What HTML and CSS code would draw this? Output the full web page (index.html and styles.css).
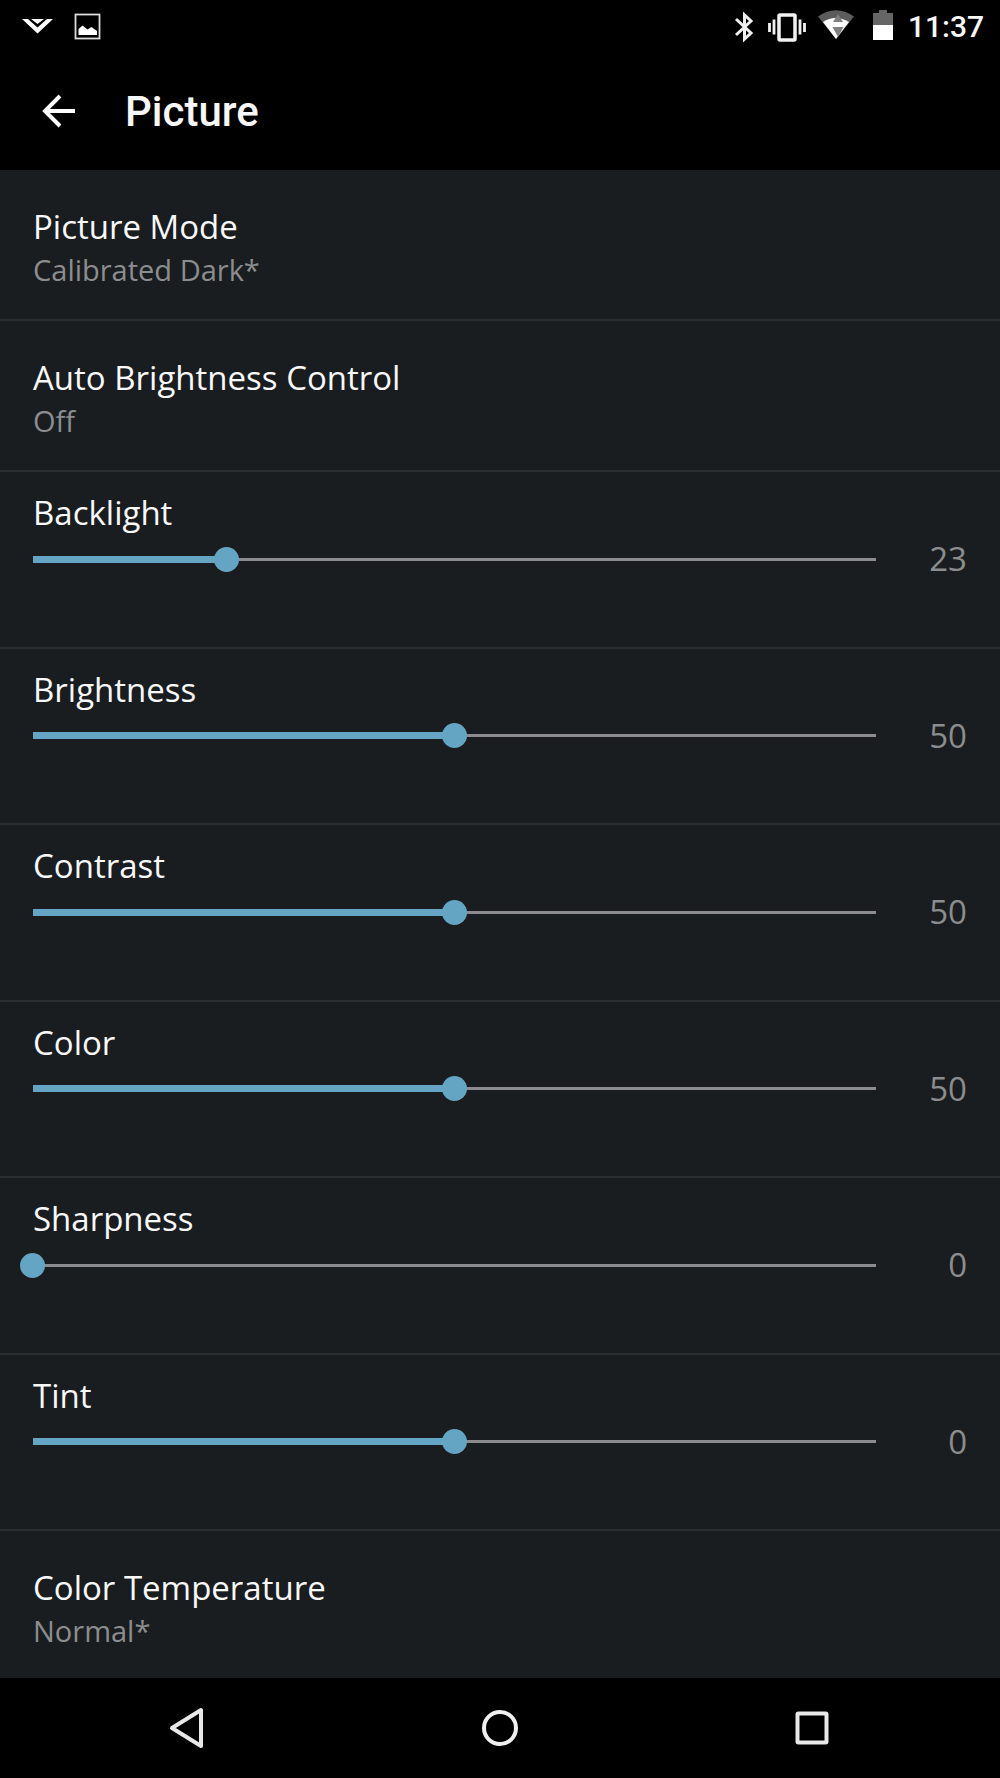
FILE: index.html
```html
<!DOCTYPE html>
<html lang="en">
<head>
  <meta charset="utf-8">
  <meta name="viewport" content="width=device-width, initial-scale=1">
  <title>Picture</title>
  <link rel="stylesheet" href="styles.css">
</head>
<body>
  <div class="status-bar">
    <div class="status-left">
      <svg width="32" height="34" viewBox="0 0 32 34" aria-hidden="true">
        <path d="M0 9h6l9.500 8.500L25 9h6L15.500 23.500z" fill="#fff"/>
        <path d="M9 9h13l-6.500 5z" fill="#fff"/>
      </svg>
      <svg width="26" height="34" viewBox="0 0 26 34" aria-hidden="true">
        <rect x="1.500" y="4.500" width="24" height="24" fill="none" stroke="#ddd" stroke-width="1.800"/>
        <path d="M4.500 25v-6l4-3.500 5 4 4-2.500 5.500 4v4z" fill="#fff"/>
      </svg>
    </div>
    <div class="status-right">
      <svg width="21" height="34" viewBox="0 0 21 34" aria-hidden="true">
        <path d="M1 9l15 14-6.500 6V5L16 11 1 25" fill="none" stroke="#f0f0f0" stroke-width="3"/>
      </svg>
      <svg width="38" height="34" viewBox="0 0 38 34" aria-hidden="true">
        <rect x="11" y="5" width="16" height="25" rx="1" fill="none" stroke="#f2f2f2" stroke-width="3.500"/>
        <path d="M1.500 13v9M6 9.500v15M32 9.500v15M36.500 13v9" stroke="#f2f2f2" stroke-width="2.800"/>
      </svg>
      <svg width="36" height="34" viewBox="0 0 36 34" aria-hidden="true">
        <path d="M0 6.500Q18-6 36 6.500L18 29z" fill="#5c5c5c"/>
        <path d="M5 12Q17 4 31 12L18 29z" fill="#fff"/>
        <path d="M20 4l5 8h-10zM14.500 17h11L20 27z" fill="#808080"/>
      </svg>
      <svg width="30" height="34" viewBox="0 0 30 34" aria-hidden="true">
        <path d="M7 3h6V0h8v3h6v12H7z" fill="#666"/>
        <path d="M7 15h20v15H7z" fill="#fff"/>
      </svg>
      <span class="clock">11:37</span>
    </div>
  </div>

  <header class="app-bar">
    <button class="back-button" type="button" aria-label="Back">
      <svg width="34" height="34" viewBox="0 0 34 34">
        <path d="M33 16H3M18 1L3 16l15 15" fill="none" stroke="#fff" stroke-width="4"/>
      </svg>
    </button>
    <h1>Picture</h1>
  </header>

  <main class="settings">
    <button class="option" type="button">
      <span class="label">Picture Mode</span>
      <span class="choice">Calibrated Dark*</span>
    </button>
    <button class="option" type="button">
      <span class="label">Auto Brightness Control</span>
      <span class="choice">Off</span>
    </button>

    <div class="setting">
      <label class="label" for="backlight">Backlight</label>
      <div class="slider-line">
        <input class="slider" type="range" id="backlight" min="0" max="100" value="23" style="--fill: 0.23">
        <output class="value" for="backlight">23</output>
      </div>
    </div>
    <div class="setting">
      <label class="label" for="brightness">Brightness</label>
      <div class="slider-line">
        <input class="slider" type="range" id="brightness" min="0" max="100" value="50" style="--fill: 0.5">
        <output class="value" for="brightness">50</output>
      </div>
    </div>
    <div class="setting">
      <label class="label" for="contrast">Contrast</label>
      <div class="slider-line">
        <input class="slider" type="range" id="contrast" min="0" max="100" value="50" style="--fill: 0.5">
        <output class="value" for="contrast">50</output>
      </div>
    </div>
    <div class="setting">
      <label class="label" for="color">Color</label>
      <div class="slider-line">
        <input class="slider" type="range" id="color" min="0" max="100" value="50" style="--fill: 0.5">
        <output class="value" for="color">50</output>
      </div>
    </div>
    <div class="setting">
      <label class="label" for="sharpness">Sharpness</label>
      <div class="slider-line">
        <input class="slider" type="range" id="sharpness" min="0" max="100" value="0" style="--fill: 0">
        <output class="value" for="sharpness">0</output>
      </div>
    </div>
    <div class="setting">
      <label class="label" for="tint">Tint</label>
      <div class="slider-line">
        <input class="slider" type="range" id="tint" min="-50" max="50" value="0" style="--fill: 0.5">
        <output class="value" for="tint">0</output>
      </div>
    </div>

    <button class="option" type="button">
      <span class="label">Color Temperature</span>
      <span class="choice">Normal*</span>
    </button>
  </main>

  <nav class="nav-bar">
    <button type="button" aria-label="Back">
      <svg width="40" height="40" viewBox="0 0 40 40">
        <path d="M33 2v36L4 20z" fill="none" stroke="#e8e8e8" stroke-width="4" stroke-linejoin="round"/>
      </svg>
    </button>
    <button type="button" aria-label="Home">
      <svg width="40" height="40" viewBox="0 0 40 40">
        <circle cx="20" cy="20" r="16" fill="none" stroke="#f0f0f0" stroke-width="4"/>
      </svg>
    </button>
    <button type="button" aria-label="Recent apps">
      <svg width="40" height="40" viewBox="0 0 40 40">
        <rect x="5.500" y="5.500" width="29" height="29" rx="1" fill="none" stroke="#e8e8e8" stroke-width="4"/>
      </svg>
    </button>
  </nav>

  <script>
    var sliders = document.querySelectorAll(".slider");

    for (var i = 0; i < sliders.length; i++) {
      sliders[i].addEventListener("input", function () {
        var fill = (this.value - this.min) / (this.max - this.min);
        this.style.setProperty("--fill", fill);
        this.nextElementSibling.textContent = this.value;
      });
    }
  </script>
</body>
</html>
```

FILE: styles.css
```css
* {
  box-sizing: border-box;
}

body {
  margin: 0;
  min-height: 100vh;
  display: flex;
  flex-direction: column;
  background: #191d1f;
  color: #f8f8f8;
  font-family: "Open Sans", "Noto Sans", sans-serif;
}

button {
  margin: 0;
  padding: 0;
  border: 0;
  background: none;
  color: inherit;
  font: inherit;
  cursor: pointer;
}

svg {
  display: block;
  overflow: visible;
}

/* Status bar */
.status-bar {
  display: flex;
  justify-content: space-between;
  align-items: center;
  height: 54px;
  padding: 0 16px 0 22px;
  background: #000;
}

.status-left {
  display: flex;
  gap: 20px;
}

.status-right {
  display: flex;
  align-items: center;
  gap: 12px;
}

.clock {
  font-family: Roboto, sans-serif;
  font-size: 30px;
  font-weight: 500;
  line-height: 34px;
}

/* App bar */
.app-bar {
  display: flex;
  align-items: center;
  gap: 49px;
  height: 116px;
  padding: 0 42px;
  background: #000;
}

.app-bar h1 {
  margin: 0;
  font-family: Roboto, sans-serif;
  font-size: 42px;
  font-weight: 500;
  line-height: 48px;
}

/* Settings list */
.settings {
  flex: 1;
  display: flex;
  flex-direction: column;
}

.option,
.setting {
  border-bottom: 2px solid #2a2e30;
}

.option {
  padding: 35px 33px 28px;
  text-align: left;
}

.option:last-child {
  border-bottom: 0;
  padding-bottom: 26px;
}

.setting {
  flex: 1;
  padding: 19px 33px 0;
}

.label {
  display: block;
  font-size: 33px;
  line-height: 44px;
}

.choice {
  display: block;
  color: #8c8d8e;
  font-size: 29px;
  line-height: 42px;
}

.slider-line {
  display: flex;
  align-items: center;
  margin-top: 2px;
}

/* the thumb is centred on the ends of the track, so it hangs 13px outside */
.slider {
  -webkit-appearance: none;
  appearance: none;
  flex: 1;
  min-width: 0;
  height: 25px;
  margin: 0 0 0 -13px;
  background-color: transparent;
  background-image: linear-gradient(#65a5c4, #65a5c4), linear-gradient(#8c8c8f, #8c8c8f);
  background-size: calc((100% - 25px) * var(--fill)) 7px, calc(100% - 25px) 3px;
  background-position: 13px 9px, 13px 11px;
  background-repeat: no-repeat;
}

.slider::-webkit-slider-thumb {
  -webkit-appearance: none;
  appearance: none;
  width: 25px;
  height: 25px;
  border-radius: 50%;
  background: #65a5c4;
}

.value {
  width: 79px;
  color: #8c8d8e;
  font-size: 33px;
  line-height: 44px;
  text-align: right;
}

/* Navigation bar */
.nav-bar {
  display: flex;
  height: 100px;
  padding: 0 32px;
  background: #000;
}

.nav-bar button {
  flex: 1;
  display: flex;
  justify-content: center;
  align-items: center;
}
```
